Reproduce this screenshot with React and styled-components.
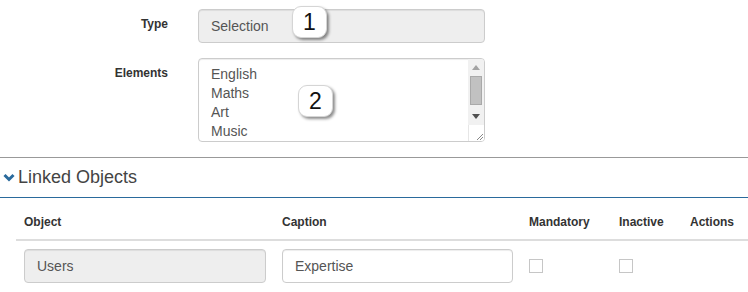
import React from "react";
import styled, { createGlobalStyle } from "styled-components";

const Global = createGlobalStyle`
  html, body { margin: 0; padding: 0; background: #fff; }
  body { font-family: "Liberation Sans", Arial, Helvetica, sans-serif; font-size: 14px; color: #333; }
  * { box-sizing: border-box; }
`;

const Page = styled.div`
  width: 748px;
  height: 292px;
  overflow: hidden;
  display: flex;
  flex-direction: column;
`;

const Form = styled.div`
  display: flex;
  flex-direction: column;
  gap: 15px;
  padding-top: 9px;
  padding-bottom: 15px;
`;

const FormRow = styled.div`
  display: flex;
  align-items: flex-start;
`;

const Label = styled.label`
  width: 183px;
  padding: 7px 15px 0 0;
  text-align: right;
  font-weight: bold;
  font-size: 12px;
  line-height: 17px;
  color: #333;
`;

const Field = styled.div`
  position: relative;
  width: 317px;
  padding-left: 15px;
  padding-right: 15px;
`;

const ReadonlyInput = styled.div`
  height: 34px;
  padding: 6px 12px;
  font-size: 14px;
  line-height: 20px;
  color: #555;
  background: ${(p) => (p.$disabled ? "#eee" : "#fff")};
  border: 1px solid #ccc;
  border-radius: 4px;
  box-shadow: inset 0 1px 1px rgba(0, 0, 0, 0.075);
`;

const ListBox = styled.div`
  height: 84px;
  border: 1px solid #ccc;
  border-radius: 4px;
  display: flex;
  overflow: hidden;
  box-shadow: inset 0 1px 1px rgba(0, 0, 0, 0.075);
`;

const Items = styled.div`
  flex: 1;
  padding: 6px 12px;
  display: flex;
  flex-direction: column;
`;

const Item = styled.div`
  font-size: 14px;
  line-height: 19px;
  color: #555;
`;

const ScrollColumn = styled.div`
  width: 16px;
  display: flex;
  flex-direction: column;
`;

const Track = styled.div`
  flex: 1;
  background: #f1f1f1;
  display: flex;
  flex-direction: column;
  align-items: center;
`;

const ArrowBox = styled.div`
  height: 17px;
  width: 100%;
  display: flex;
  align-items: center;
  justify-content: center;
`;

const Thumb = styled.div`
  width: 12px;
  height: 29px;
  background: #c1c1c1;
  border: 1px solid #a9a9a9;
`;

const Spacer = styled.div`
  flex: 1;
`;

const Resizer = styled.div`
  height: 16px;
  background: #fff;
  border-left: 1px solid #e6e6e6;
  display: flex;
  align-items: flex-end;
  justify-content: flex-end;
`;

const Badge = styled.div`
  position: absolute;
  left: ${(p) => p.$left}px;
  top: ${(p) => p.$top}px;
  width: 35px;
  height: 32px;
  background: #fff;
  border: 1px solid #d5d5d5;
  border-radius: 9px;
  box-shadow: 2px 2px 3px rgba(0, 0, 0, 0.45);
  display: flex;
  align-items: center;
  justify-content: center;
  font-size: 23px;
  color: #111;
`;

const Section = styled.div`
  border-top: 1px solid #999;
`;

const SectionHeader = styled.div`
  height: 40px;
  display: flex;
  align-items: center;
  gap: 3px;
  padding-left: 3px;
  border-bottom: 1px solid #2a6a9c;
  font-size: 18px;
  color: #444;
`;

const Table = styled.table`
  margin: 8px 0 0 16px;
  width: 732px;
  border-collapse: collapse;
  table-layout: fixed;
`;

const Th = styled.th`
  width: ${(p) => (p.$w ? `${p.$w}px` : "auto")};
  text-align: left;
  padding: 8px;
  font-size: 12px;
  line-height: 17px;
  font-weight: bold;
  color: #333;
  border-bottom: 2px solid #ddd;
`;

const Td = styled.td`
  padding: 8px;
  vertical-align: top;
`;

const CheckBox = styled.div`
  margin-top: 10px;
  width: 14px;
  height: 14px;
  border: 1px solid #c6c6c6;
  background: #fff;
`;

const Chevron = () => (
  <svg width="12" height="9" viewBox="0 0 12 9">
    <polyline points="1.5,2 6,6.5 10.5,2" fill="none" stroke="#2a6a9c" strokeWidth="3" />
  </svg>
);

export default function App() {
  return (
    <Page>
      <Global />
      <Form>
        <FormRow>
          <Label>Type</Label>
          <Field>
            <ReadonlyInput $disabled>Selection</ReadonlyInput>
            <Badge $left={109} $top={-3}>1</Badge>
          </Field>
        </FormRow>
        <FormRow>
          <Label>Elements</Label>
          <Field>
            <ListBox>
              <Items>
                <Item>English</Item>
                <Item>Maths</Item>
                <Item>Art</Item>
                <Item>Music</Item>
              </Items>
              <ScrollColumn>
                <Track>
                  <ArrowBox>
                    <svg width="8" height="5" viewBox="0 0 8 5">
                      <polygon points="0,5 8,5 4,0" fill="#a3a3a3" />
                    </svg>
                  </ArrowBox>
                  <Thumb />
                  <Spacer />
                  <ArrowBox>
                    <svg width="8" height="5" viewBox="0 0 8 5">
                      <polygon points="0,0 8,0 4,5" fill="#505050" />
                    </svg>
                  </ArrowBox>
                </Track>
                <Resizer>
                  <svg width="9" height="9" viewBox="0 0 9 9">
                    <line x1="2" y1="8" x2="8" y2="2" stroke="#888" strokeWidth="1" />
                    <line x1="5" y1="8" x2="8" y2="5" stroke="#888" strokeWidth="1" />
                  </svg>
                </Resizer>
              </ScrollColumn>
            </ListBox>
            <Badge $left={115} $top={27}>2</Badge>
          </Field>
        </FormRow>
      </Form>
      <Section>
        <SectionHeader>
          <Chevron />
          Linked Objects
        </SectionHeader>
        <Table>
          <thead>
            <tr>
              <Th $w={258}>Object</Th>
              <Th $w={247}>Caption</Th>
              <Th $w={90}>Mandatory</Th>
              <Th $w={71}>Inactive</Th>
              <Th>Actions</Th>
            </tr>
          </thead>
          <tbody>
            <tr>
              <Td><ReadonlyInput $disabled>Users</ReadonlyInput></Td>
              <Td><ReadonlyInput>Expertise</ReadonlyInput></Td>
              <Td><CheckBox /></Td>
              <Td><CheckBox /></Td>
              <Td />
            </tr>
          </tbody>
        </Table>
      </Section>
    </Page>
  );
}
